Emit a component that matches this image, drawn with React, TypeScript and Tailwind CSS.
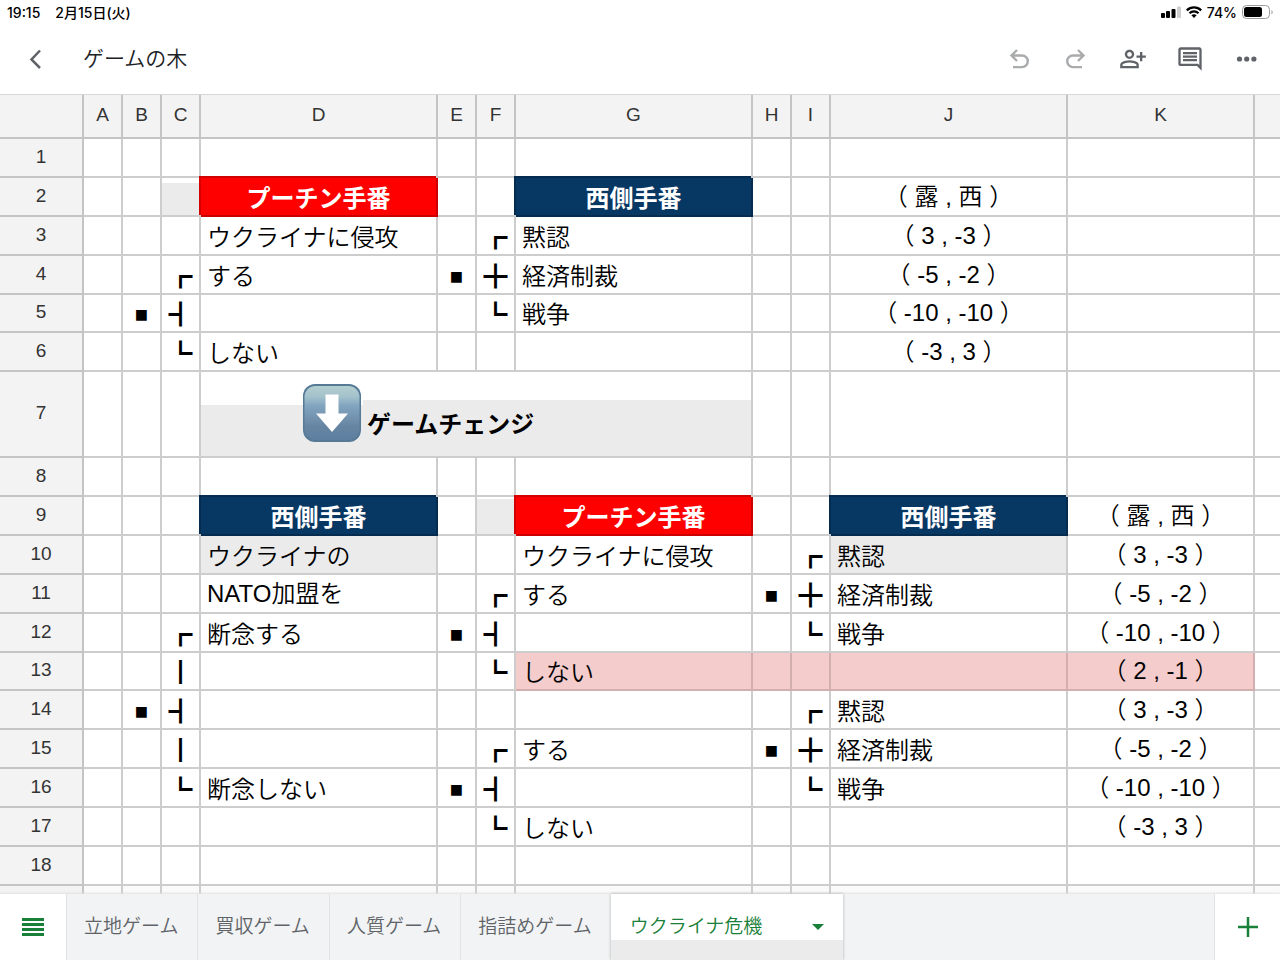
import React, { useState } from 'react';
import { MdOutlineComment, MdOutlinePersonAddAlt } from 'react-icons/md';

type Tone = 'red' | 'navy' | 'pink' | 'gray' | 'grayLow' | 'banner';

interface Cell {
  text?: string;
  tone?: Tone;
}

interface Row {
  height: string;
  cells: Record<string, Cell>;
}

const columns = [
  { name: 'A', width: 'w-[39px]' },
  { name: 'B', width: 'w-[39px]' },
  { name: 'C', width: 'w-[39px]' },
  { name: 'D', width: 'w-[237px]' },
  { name: 'E', width: 'w-[39px]' },
  { name: 'F', width: 'w-[39px]' },
  { name: 'G', width: 'w-[237px]' },
  { name: 'H', width: 'w-[39px]' },
  { name: 'I', width: 'w-[39px]' },
  { name: 'J', width: 'w-[237px]' },
  { name: 'K', width: 'w-[187px]' },
  { name: '', width: '' },
];

const H = 'h-[39px]';
const H_SHORT = 'h-[38px]';

const rows: Row[] = [
  { height: H, cells: {} },
  {
    height: H,
    cells: {
      C: { tone: 'grayLow' },
      D: { text: 'プーチン手番', tone: 'red' },
      G: { text: '西側手番', tone: 'navy' },
      J: { text: '（ 露 , 西 ）' },
    },
  },
  { height: H, cells: { D: { text: 'ウクライナに侵攻' }, F: { text: '┏' }, G: { text: '黙認' }, J: { text: '（ 3 , -3 ）' } } },
  {
    height: H,
    cells: { C: { text: '┏' }, D: { text: 'する' }, E: { text: '■' }, F: { text: '╋' }, G: { text: '経済制裁' }, J: { text: '（ -5 , -2 ）' } },
  },
  { height: H_SHORT, cells: { B: { text: '■' }, C: { text: '┫' }, F: { text: '┗' }, G: { text: '戦争' }, J: { text: '（ -10 , -10 ）' } } },
  { height: H, cells: { C: { text: '┗' }, D: { text: 'しない' }, J: { text: '（ -3 , 3 ）' } } },
  { height: 'h-[86px]', cells: { D: { text: 'ゲームチェンジ', tone: 'banner' } } },
  { height: H, cells: {} },
  {
    height: H,
    cells: {
      D: { text: '西側手番', tone: 'navy' },
      F: { tone: 'grayLow' },
      G: { text: 'プーチン手番', tone: 'red' },
      J: { text: '西側手番', tone: 'navy' },
      K: { text: '（ 露 , 西 ）' },
    },
  },
  {
    height: H,
    cells: {
      D: { text: 'ウクライナの', tone: 'gray' },
      G: { text: 'ウクライナに侵攻' },
      I: { text: '┏' },
      J: { text: '黙認', tone: 'gray' },
      K: { text: '（ 3 , -3 ）' },
    },
  },
  {
    height: H,
    cells: {
      D: { text: 'NATO加盟を' },
      F: { text: '┏' },
      G: { text: 'する' },
      H: { text: '■' },
      I: { text: '╋' },
      J: { text: '経済制裁' },
      K: { text: '（ -5 , -2 ）' },
    },
  },
  {
    height: H,
    cells: {
      C: { text: '┏' },
      D: { text: '断念する' },
      E: { text: '■' },
      F: { text: '┫' },
      I: { text: '┗' },
      J: { text: '戦争' },
      K: { text: '（ -10 , -10 ）' },
    },
  },
  {
    height: H_SHORT,
    cells: {
      C: { text: '┃' },
      F: { text: '┗' },
      G: { text: 'しない', tone: 'pink' },
      H: { tone: 'pink' },
      I: { tone: 'pink' },
      J: { tone: 'pink' },
      K: { text: '（ 2 , -1 ）', tone: 'pink' },
    },
  },
  { height: H, cells: { B: { text: '■' }, C: { text: '┫' }, I: { text: '┏' }, J: { text: '黙認' }, K: { text: '（ 3 , -3 ）' } } },
  {
    height: H,
    cells: {
      C: { text: '┃' },
      F: { text: '┏' },
      G: { text: 'する' },
      H: { text: '■' },
      I: { text: '╋' },
      J: { text: '経済制裁' },
      K: { text: '（ -5 , -2 ）' },
    },
  },
  {
    height: H,
    cells: {
      C: { text: '┗' },
      D: { text: '断念しない' },
      E: { text: '■' },
      F: { text: '┫' },
      I: { text: '┗' },
      J: { text: '戦争' },
      K: { text: '（ -10 , -10 ）' },
    },
  },
  { height: H, cells: { F: { text: '┗' }, G: { text: 'しない' }, K: { text: '（ -3 , 3 ）' } } },
  { height: H, cells: {} },
];

const tones: Record<Tone, string> = {
  red: 'bg-[#ff0000] border-[#cc0000] text-white font-bold text-center shadow-[-2px_-2px_0_#d40000]',
  navy: 'bg-[#073763] border-[#052c4f] text-white font-bold text-center shadow-[-2px_-2px_0_#052c4f]',
  pink: 'bg-[#f4cccc] border-[#d3aeae]',
  gray: 'bg-[#ebebeb] border-[#cdcdcd]',
  grayLow: 'border-[#cdcdcd]',
  banner: 'border-[#cdcdcd]',
};

function DownArrowEmoji() {
  return (
    <svg viewBox="0 0 58 58" className="absolute bottom-[14px] left-0 w-[58px] h-[58px]" role="img" aria-label="下矢印">
      <defs>
        <linearGradient id="key" x1="0" y1="0" x2="0" y2="1">
          <stop offset="0" stopColor="#b4cfd0" />
          <stop offset="0.2" stopColor="#a3c1cb" />
          <stop offset="0.35" stopColor="#84a6c0" />
          <stop offset="0.75" stopColor="#6685a3" />
          <stop offset="1" stopColor="#5d7f9f" />
        </linearGradient>
      </defs>
      <rect x="0" y="0" width="58" height="58" rx="12" fill="#567a96" />
      <rect x="1.5" y="2" width="55" height="54" rx="11" fill="url(#key)" />
      <path d="M22.5 10.5h13v19h9.5L29 48 13 29.5h9.5z" fill="#fff" />
    </svg>
  );
}

function Banner({ text }: { text?: string }) {
  return (
    <div className="flex h-[84px] items-end font-bold">
      <div className="h-[51px] w-[102px] bg-[#ebebeb]" />
      <div className="relative h-[51px] w-[60px] bg-[#ebebeb]">
        <DownArrowEmoji />
      </div>
      <div className="flex h-[56px] flex-1 items-center bg-[#ebebeb] px-[4px] pb-[6px]">{text}</div>
    </div>
  );
}

function SheetCell({ column, cell }: { column: string; cell?: Cell }) {
  const tone = cell?.tone ? tones[cell.tone] : 'border-[#cdcdcd]';
  const line = column ? 'border-r-2 border-b-2' : 'border-b-2';
  if (cell?.tone === 'banner') {
    return (
      <td colSpan={4} className={`${line} p-0 ${tone}`}>
        <Banner text={cell.text} />
      </td>
    );
  }
  if (cell?.tone === 'grayLow') {
    return (
      <td className={`${line} p-0 align-bottom ${tone}`}>
        <div className={`bg-[#ebebeb] ${column === 'F' ? 'h-[35px]' : 'h-[32px]'}`} />
      </td>
    );
  }
  const text = cell?.text ?? '';
  const payoff = text.startsWith('（');
  const branch = column !== '' && 'BCEFHI'.includes(column);
  const leading = payoff || text.startsWith('NATO') ? 'leading-[30px]' : 'leading-[34px]';
  const align = branch ? 'flex justify-center' : payoff ? 'text-center' : 'px-[6px]';
  return (
    <td className={`${line} p-0 ${tone}`}>
      <div className={`h-[30px] ${leading} ${align} ${text === '■' ? 'text-[22px]' : ''}`}>{text}</div>
    </td>
  );
}

function StatusBar() {
  return (
    <div className="flex h-6 items-center justify-between pl-[7px] pr-[6px] font-['Inter','Noto_Sans_CJK_JP',sans-serif] text-[14px] font-medium text-black">
      <div className="flex gap-[15px]">
        <span>19:15</span>
        <span>2月15日(火)</span>
      </div>
      <div className="flex items-center gap-[5px]">
        <svg viewBox="0 0 20 12" className="h-3 w-5">
          <rect x="0" y="7" width="4" height="5" rx="1" />
          <rect x="5" y="5" width="4" height="7" rx="1" />
          <rect x="10.5" y="3" width="4" height="9" rx="1" />
          <rect x="16" y="0.5" width="4" height="11.5" rx="1" fill="#cfcfcf" />
        </svg>
        <svg viewBox="0 0 16 12" className="h-3 w-4" fill="none" stroke="#000" strokeWidth="2.2">
          <path d="M0.8 4.4C4.8 0.4 11.2 0.4 15.2 4.4" />
          <path d="M3.5 7.2c2.5-2.5 6.5-2.5 9 0" />
          <path d="M8 12 5.4 9.3c1.5-1.3 3.7-1.3 5.2 0z" fill="#000" stroke="none" />
        </svg>
        <span>74%</span>
        <svg viewBox="0 0 32 14" className="h-[14px] w-8">
          <rect x="0.5" y="0.5" width="27" height="13" rx="4" fill="none" stroke="#9a9a9a" />
          <rect x="2" y="2" width="18" height="10" rx="2.5" />
          <path d="M29.5 5v4.5c1.6-.8 1.6-3.7 0-4.5z" fill="#9a9a9a" />
        </svg>
      </div>
    </div>
  );
}

function Toolbar() {
  return (
    <header className="flex h-[70px] items-center pr-[19px] pl-[22px] text-[#5f6368]">
      <button type="button" aria-label="戻る" className="flex h-7 w-7 items-center justify-center">
        <svg viewBox="0 0 28 28" className="h-7 w-7" fill="none" stroke="currentColor" strokeWidth="2.5">
          <path d="M18 5.5 9.5 14.5l8.5 8.5" />
        </svg>
      </button>
      <h1 className="ml-[33px] flex-1 text-[21px] font-[350] text-[#202124]">ゲームの木</h1>
      <div className="flex items-center gap-[29px]">
        <button type="button" aria-label="元に戻す" className="text-[#a9abad]">
          <svg viewBox="0 0 28 28" className="h-7 w-7" fill="none" stroke="currentColor" strokeWidth="2.4">
            <path d="M12 5 6.5 10.5l5.5 5.5M6.5 10.5H17a5.8 5.8 0 0 1 0 11.6H8" />
          </svg>
        </button>
        <button type="button" aria-label="やり直す" className="text-[#a9abad]">
          <svg viewBox="0 0 28 28" className="h-7 w-7" fill="none" stroke="currentColor" strokeWidth="2.4">
            <path d="M16 5l5.5 5.5L16 16M21.5 10.5H11a5.8 5.8 0 0 0 0 11.6h9" />
          </svg>
        </button>
        <button type="button" aria-label="共有">
          <MdOutlinePersonAddAlt size={28} />
        </button>
        <button type="button" aria-label="コメント">
          <MdOutlineComment size={28} />
        </button>
        <button type="button" aria-label="その他">
          <svg viewBox="0 0 28 28" className="h-7 w-7" fill="currentColor">
            <circle cx="6.5" cy="14" r="2.6" />
            <circle cx="13.7" cy="14" r="2.6" />
            <circle cx="20.9" cy="14" r="2.6" />
          </svg>
        </button>
      </div>
    </header>
  );
}

function Sheet() {
  return (
    <div className="flex min-h-0 flex-1 flex-col overflow-hidden border-t border-[#d6d6d6]">
      <table className="w-full table-fixed border-separate border-spacing-0 text-[24px] font-[350] text-black">
        <thead>
          <tr className="h-[44px] bg-[#f3f3f3] text-[19px] leading-6 text-[#333333]">
            <th aria-label="行" className="w-[84px] border-r-2 border-b-2 border-[#c4c4c4] p-0" />
            {columns.map((c, i) => (
              <th
                key={i}
                scope="col"
                className={`${c.width} border-b-2 border-[#c4c4c4] p-0 pb-[2px] font-normal ${c.name ? 'border-r-2' : ''}`}
              >
                {c.name}
              </th>
            ))}
          </tr>
        </thead>
        <tbody>
          {rows.map((row, i) => (
            <tr key={i} className={row.height}>
              <th scope="row" className="border-r-2 border-b-2 border-[#c4c4c4] bg-[#f3f3f3] p-0 pb-[2px] text-[19px] leading-6 font-normal text-[#333333]">
                {i + 1}
              </th>
              {columns
                .filter((c) => !(row.cells.D?.tone === 'banner' && ['E', 'F', 'G'].includes(c.name)))
                .map((c) => (
                  <SheetCell key={c.name} column={c.name} cell={row.cells[c.name]} />
                ))}
            </tr>
          ))}
          <tr className={H} aria-hidden="true">
            <td className="border-r-2 border-[#c4c4c4] bg-[#f3f3f3] p-0" />
            {columns.map((c) => (
              <td key={c.name} className={`border-[#cdcdcd] bg-[#fafafa] p-0 ${c.name ? 'border-r-2' : ''}`} />
            ))}
          </tr>
        </tbody>
      </table>
    </div>
  );
}

const sheets = ['立地ゲーム', '買収ゲーム', '人質ゲーム', '指詰めゲーム', 'ウクライナ危機'];

function SheetTabs() {
  const [active, setActive] = useState('ウクライナ危機');

  return (
    <footer className="relative flex h-[66px] shrink-0 bg-[#f1f3f4] text-[19px] font-[350] shadow-[0_-1px_2px_#e0e0e0]">
      <button type="button" aria-label="すべてのシート" className="flex w-[66px] items-center justify-center bg-white text-[#188038]">
        <svg viewBox="0 0 22 18" className="h-[18px] w-[22px]" fill="currentColor">
          <path d="M0 0h22v3H0zM0 5h22v3H0zM0 10h22v3H0zM0 15h22v3H0z" />
        </svg>
      </button>
      <nav className="flex flex-1">
        {sheets.map((name) =>
          name === active ? (
            <button
              key={name}
              type="button"
              className="flex w-[232px] items-center justify-between bg-linear-to-b from-white from-70% to-[#ebebeb] to-70% px-[19px] whitespace-nowrap text-[#188038] shadow-[0_0_3px_#b0b0b0]"
            >
              {name}
              <svg viewBox="0 0 12 6" className="h-[6px] w-3" fill="currentColor">
                <path d="M0 0h12L6 6z" />
              </svg>
            </button>
          ) : (
            <button
              key={name}
              type="button"
              onClick={() => setActive(name)}
              className="border-l border-[#e0e2e3] pr-[19px] pl-[17px] whitespace-nowrap text-[#5f6368]"
            >
              {name}
            </button>
          ),
        )}
      </nav>
      <button type="button" aria-label="シートを追加" className="flex w-[66px] items-center justify-center border-l border-[#e0e2e3] bg-white text-[#188038]">
        <svg viewBox="0 0 20 20" className="h-5 w-5" fill="none" stroke="currentColor" strokeWidth="2.5">
          <path d="M10 0v20M0 10h20" />
        </svg>
      </button>
    </footer>
  );
}

export default function App() {
  return (
    <main className="flex h-screen flex-col overflow-hidden bg-white font-['Liberation_Sans','Noto_Sans_CJK_JP',sans-serif]" lang="ja">
      <StatusBar />
      <Toolbar />
      <Sheet />
      <SheetTabs />
    </main>
  );
}
